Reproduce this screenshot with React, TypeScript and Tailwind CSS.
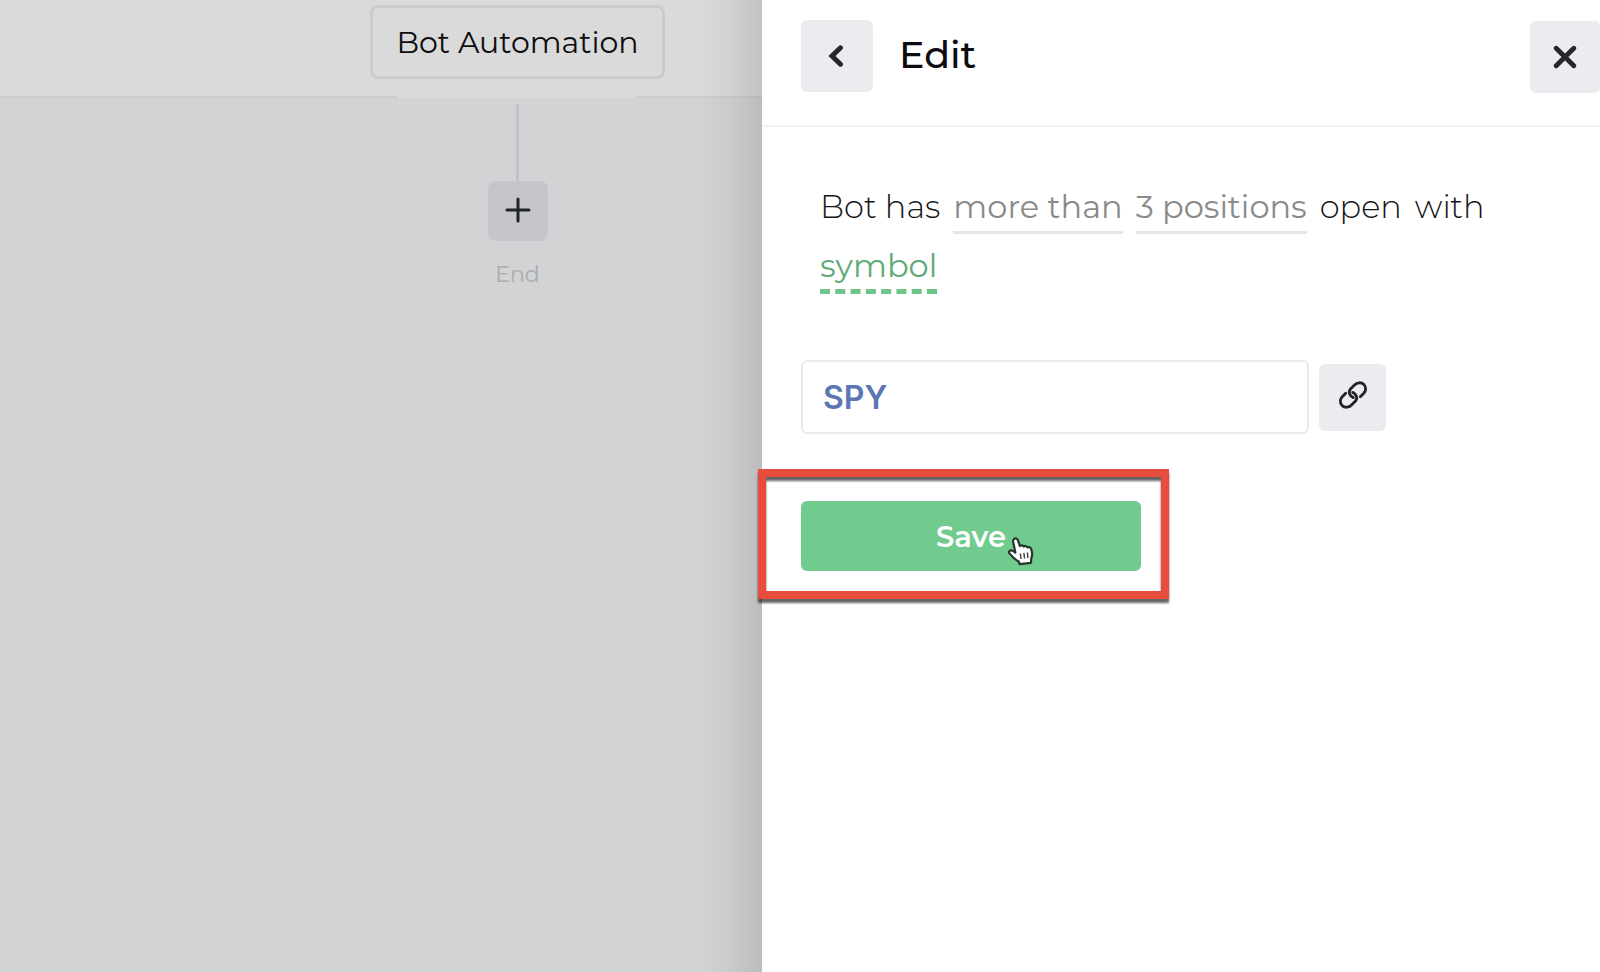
import { useState } from 'react'
import type { ReactNode } from 'react'
import clsx from 'clsx'

// ─────────────────────────────────────────────
// Bot automation editor
// Left: dimmed flow canvas, right: edit drawer
// ─────────────────────────────────────────────

function PlusIcon() {
  return (
    <svg width="26" height="26" viewBox="0 0 26 26" fill="none" aria-hidden>
      <path d="M13 2v22M2 13h22" stroke="#202328" strokeWidth="3" strokeLinecap="round" />
    </svg>
  )
}

function ChevronIcon() {
  return (
    <svg width="24" height="24" viewBox="0 0 24 24" fill="none" aria-hidden>
      <path d="M15.500 3.800L7 12l8.500 8.200" stroke="#25272c" strokeWidth="5" strokeLinecap="round" />
    </svg>
  )
}

function CloseIcon() {
  return (
    <svg width="24" height="24" viewBox="0 0 24 24" fill="none" aria-hidden>
      <path d="M3.200 3.200l17.600 17.600M20.800 3.200L3.200 20.800" stroke="#25272c" strokeWidth="4.800" strokeLinecap="round" />
    </svg>
  )
}

function LinkIcon() {
  return (
    <svg width="28" height="28" viewBox="0 0 28 28" fill="none" stroke="#202328" strokeWidth="2.800" strokeLinecap="round" className="overflow-visible" aria-hidden>
      <path d="M14.300 16.600C10.500 15 9 11 11.500 8L15.500 4C18 1.200 22.300 1 25 3.600C27.400 6.200 27 10 24.800 12.300L21.300 15.800" />
      <path d="M13.700 11.400C17.500 13 19 17 16.500 20L12.500 24C10 26.800 5.700 27 3 24.400C.6 21.800 1 18 3.200 15.700L6.700 12.200" />
    </svg>
  )
}

function HandCursor() {
  return (
    <svg width="28" height="30" viewBox="0 0 28 30" fill="none" aria-hidden>
      <path
        d="M7 3C8.500 1.800 10.300 2.600 10.900 4.300L13 10.100C14.200 8.800 16 9.200 16.800 10.500C18.200 9.500 19.700 10 20.300 11.300C22 10.600 23.600 11.400 24.200 13.100C25.400 16.800 25.600 19.700 24.200 22.700L24 26.800L12.700 28.200L11.800 25.600C8.500 23.900 5 20.600 2.500 17.400C1.300 15.700 2.900 13.800 4.800 14.400L8.400 16.600L6.200 6C6 4.700 6.100 3.700 7 3Z"
        fill="#fff"
        stroke="#26352d"
        strokeWidth="2.200"
        strokeLinejoin="round"
      />
      <path d="M13.300 17.500l.8 5.500M16.900 17l.7 5.500M20.400 16.500l.5 5.500" stroke="#444b47" strokeWidth="1.500" />
    </svg>
  )
}

function IconButton({ label, className, children }: { label: string; className?: string; children: ReactNode }) {
  return (
    <button
      type="button"
      aria-label={label}
      className={clsx('flex shrink-0 items-center justify-center rounded-md bg-[#ebebf0]', className)}
    >
      {children}
    </button>
  )
}

function Canvas() {
  return (
    <section className="flex min-w-0 flex-1 flex-col bg-[#d1d3d5]">
      <div className="flex h-[98px] justify-center border-b-2 border-[#cdcdcf] bg-[#dadada] pl-[273px] pt-[5px]">
        <div className="relative">
          <button type="button" className="h-[74px] w-[295px] rounded-lg border-3 border-[#cbcbcb] text-[30px] text-[#0d0d0f]">
            Bot Automation
          </button>
          {/* Tab foot, breaks the header's bottom line */}
          <div className="absolute -bottom-[2px] left-7 right-7 h-1 bg-[#d9d8db]" />
        </div>
      </div>
      <div className="flex flex-col items-center pl-[273px] pt-[6px]">
        <div className="h-[77px] w-[3px] bg-[#c0c1c5]" />
        <button type="button" aria-label="Add step" className="flex size-[60px] items-center justify-center rounded-lg bg-[#c5c6cc] pb-[2px]">
          <PlusIcon />
        </button>
        <span className="mt-5 text-[22px] leading-7 text-[#abacae]">End</span>
      </div>
    </section>
  )
}

function Drawer() {
  const [symbol, setSymbol] = useState('SPY')

  return (
    <aside className="relative w-[838px] shrink-0 bg-white">
      {/* Shade that the drawer casts on the canvas */}
      <div className="pointer-events-none absolute inset-y-0 right-full w-16 bg-linear-to-l from-black/11 via-black/4 to-transparent" />

      {/* ── Header ── */}
      <header className="flex h-[127px] items-start border-b-2 border-[#f1f1f1] pl-[39px] pt-5">
        <IconButton label="Back" className="size-[72px]">
          <ChevronIcon />
        </IconButton>
        <h1 className="ml-[26px] mt-[11px] text-[38px] font-medium leading-[48px] text-[#0d0d0f]">Edit</h1>
        <IconButton label="Close" className="ml-auto mt-px h-[72px] w-[70px]">
          <CloseIcon />
        </IconButton>
      </header>

      {/* ── Condition ── */}
      <p className="flex flex-wrap gap-x-[13px] gap-y-[11px] pl-[58px] pr-10 pt-[59px] text-[32px] font-light leading-[42px] text-[#151517]">
        <span>Bot has</span>
        <a href="#more-than" className="border-b-3 border-[#e5e5e5] pb-[3px] font-normal text-[#8a8a8a]">more than</a>
        <a href="#positions" className="border-b-3 border-[#e5e5e5] pb-[3px] font-normal text-[#8a8a8a]">3 positions</a>
        <span>open</span>
        <span>with</span>
        <a href="#symbol" className="border-b-5 border-dashed border-[#6ec58a] pb-[2px] font-normal text-[#5faa76]">symbol</a>
      </p>

      {/* ── Form ── */}
      <form className="pl-[39px] pt-[66px]" onSubmit={e => e.preventDefault()}>
        <div className="flex items-center gap-[10px]">
          <input
            type="text"
            aria-label="Symbol"
            value={symbol}
            onChange={e => setSymbol(e.target.value)}
            className="h-[74px] w-[508px] rounded-md border-2 border-[#eaeaea] px-5 font-['Inter',sans-serif] text-[32px] font-semibold text-[#5a76b5]"
          />
          <IconButton label="Link symbol" className="size-[67px] pb-[5px]">
            <LinkIcon />
          </IconButton>
        </div>
        <div className="relative mt-[67px] w-[340px]">
          <button type="submit" className="h-[70px] w-full rounded-md bg-[#71cb8f] pt-px text-[29px] font-semibold text-white">
            Save
          </button>
          <div className="pointer-events-none absolute -bottom-[28px] -left-[43px] -right-[28px] -top-[32px] border-8 border-[#e84c3d] drop-shadow-[0_4px_1px_rgba(0,0,0,0.6)]" />
          <div className="pointer-events-none absolute left-[206px] top-[35px]">
            <HandCursor />
          </div>
        </div>
      </form>
    </aside>
  )
}

export default function App() {
  return (
    <main className="flex min-h-screen overflow-hidden font-['Montserrat','Inter',sans-serif]">
      <Canvas />
      <Drawer />
    </main>
  )
}
